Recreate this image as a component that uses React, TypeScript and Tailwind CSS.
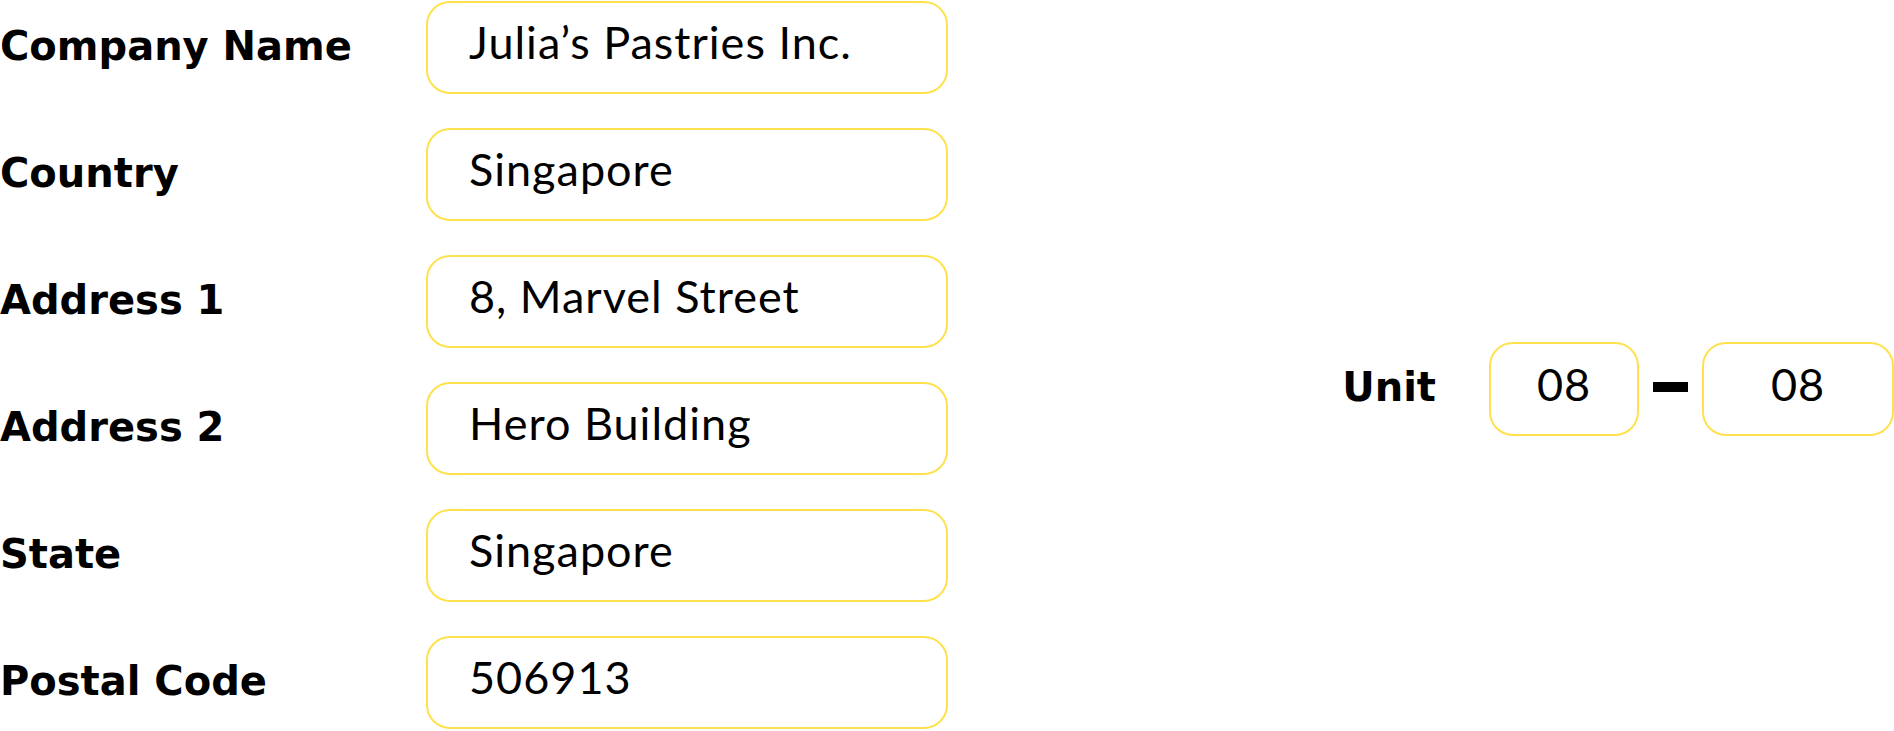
import React from "react";

const rows: { label: string; value: string }[] = [
  { label: "Company Name", value: "Julia’s Pastries Inc." },
  { label: "Country", value: "Singapore" },
  { label: "Address 1", value: "8, Marvel Street" },
  { label: "Address 2", value: "Hero Building" },
  { label: "State", value: "Singapore" },
  { label: "Postal Code", value: "506913" },
];

const labelCls =
  "text-[40px] font-bold leading-none pb-[4px] [font-family:'DejaVu_Sans',Lato,sans-serif]";
const valueCls = "text-[45px] tracking-[1px] leading-none pb-[10px]";

export default function App() {
  return (
    <div className="w-[1894px] h-[731px] bg-white text-black flex justify-between overflow-hidden [font-family:Lato,'Noto_Sans',sans-serif]">
      <div className="flex flex-col gap-[34px] pt-[1px]">
        {rows.map((r) => (
          <div key={r.label} className="flex items-center h-[93px]">
            <div className={"w-[426px] " + labelCls}>{r.label}</div>
            <div
              className={
                "w-[522px] h-[93px] border-2 border-[#ffe14d] rounded-[24px] flex items-center pl-[41px] " +
                valueCls
              }
            >
              {r.value}
            </div>
          </div>
        ))}
      </div>
      <div className="flex items-center mt-[342px] self-start h-[94px]">
        <div className={"mr-[53px] " + labelCls}>Unit</div>
        <div
          className={
            "w-[150px] h-[94px] border-2 border-[#ffe14d] rounded-[24px] flex items-center justify-center " +
            valueCls
          }
        >
          08
        </div>
        <div className="w-[35px] h-[10px] bg-black mx-[14px] mb-[4px]"></div>
        <div
          className={
            "w-[192px] h-[94px] border-2 border-[#ffe14d] rounded-[24px] flex items-center justify-center " +
            valueCls
          }
        >
          08
        </div>
      </div>
    </div>
  );
}
